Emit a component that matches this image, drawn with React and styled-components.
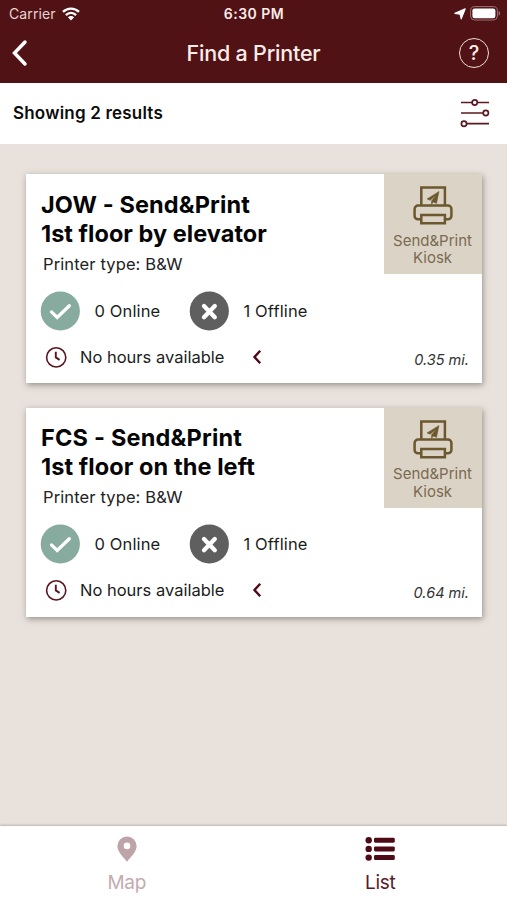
import styled, { createGlobalStyle } from "styled-components";

const printers = [
  {
    id: "jow",
    name: "JOW - Send&Print",
    nameSpacing: "0.12px",
    location: "1st floor by elevator",
    locationSpacing: "0.04px",
    online: 0,
    offline: 1,
    distance: "0.35 mi.",
  },
  {
    id: "fcs",
    name: "FCS - Send&Print",
    nameSpacing: "0.2px",
    location: "1st floor on the left",
    locationSpacing: "0.09px",
    online: 0,
    offline: 1,
    distance: "0.64 mi.",
  },
];

const WifiIcon = () => (
  <svg width="18" height="14" viewBox="0 0 18 14" fill="none" stroke="#fff" strokeWidth="2.3">
    <path d="M1 4.9C5.5.4 12.5.4 17 4.9" />
    <path d="M3.9 8.1c2.9-2.9 7.3-2.9 10.2 0" />
    <path d="M9 13.5 5.9 10.3c1.7-1.6 4.5-1.6 6.2 0z" fill="#fff" stroke="none" />
  </svg>
);

const LocationIcon = () => (
  <svg width="12" height="12" viewBox="0 0 12 12">
    <path d="M11.2.9 7.2 10.9 6.2 6.2.9 5.3z" fill="#fff" stroke="#fff" strokeWidth="1.2" strokeLinejoin="round" />
  </svg>
);

const BatteryIcon = () => (
  <svg width="31" height="15" viewBox="0 0 31 15">
    <rect x=".6" y=".6" width="26.8" height="13.4" rx="4" fill="none" stroke="#9b7274" strokeWidth="1" />
    <rect x="2.4" y="2.4" width="23" height="9.8" rx="2.2" fill="#fff" />
    <path d="M28.6 5v4.6c2-.8 2-3.8 0-4.6z" fill="#9b7274" />
  </svg>
);

const BackIcon = () => (
  <svg width="18" height="28" viewBox="0 0 18 28" fill="none">
    <path d="M15 3 4.5 14 15 25" stroke="#fff" strokeWidth="3.5" strokeLinecap="round" />
  </svg>
);

const FilterIcon = () => (
  <svg width="30" height="30" viewBox="0 0 30 30" fill="#fff" stroke="#5a1a20" strokeWidth="1.7">
    <path d="M1 4.5h28M1 15h28M1 25.7h28" />
    <circle cx="14.7" cy="4.5" r="2.6" />
    <circle cx="25.8" cy="15" r="2.6" />
    <circle cx="4" cy="25.7" r="2.6" />
  </svg>
);

const KioskIcon = () => (
  <svg width="40" height="40" viewBox="0 0 40 40" fill="none" stroke="#6b582e" strokeWidth="2.5">
    <path d="M8.3 20V2.4h23.6V20" />
    <path d="M8 34.3H5a3.4 3.4 0 0 1-3.4-3.4V24a3.4 3.4 0 0 1 3.4-3.4h30a3.4 3.4 0 0 1 3.4 3.4v6.9a3.4 3.4 0 0 1-3.4 3.4h-3" />
    <path d="M8.3 30h23.6v8.2H8.3z" />
    <path d="M26 6.5 14 13.9l3.2 1.4 6-5.3-4.7 6v3.3l2-2.3 3 1.4z" fill="#6b582e" stroke="#6b582e" strokeWidth=".5" />
  </svg>
);

const CheckIcon = () => (
  <svg width="40" height="40" viewBox="0 0 40 40" fill="none">
    <circle cx="20.3" cy="20" r="19.6" fill="#88aba0" />
    <path d="m11.5 20.9 5.7 5.6L29.3 14.7" stroke="#fff" strokeWidth="3.3" strokeLinecap="round" />
  </svg>
);

const CrossIcon = () => (
  <svg width="40" height="40" viewBox="0 0 40 40" fill="none">
    <circle cx="20.3" cy="20" r="19.6" fill="#605f5f" />
    <path d="m15 15 10.8 11.2M25.8 15 15 26.2" stroke="#fff" strokeWidth="4.3" strokeLinecap="round" />
  </svg>
);

const ClockIcon = () => (
  <svg width="22" height="22" viewBox="0 0 22 22" fill="none" stroke="#5a1520">
    <circle cx="11.2" cy="11.4" r="9.6" strokeWidth="1.6" />
    <path d="M10.8 5.8v5.6l3.8 2.5" strokeWidth="1.9" />
  </svg>
);

const ChevronIcon = () => (
  <svg width="10" height="16" viewBox="0 0 10 16" fill="none">
    <path d="M8.2 1.7 2.5 8l5.7 6.3" stroke="#4f0914" strokeWidth="2.4" />
  </svg>
);

const PinIcon = () => (
  <svg width="20" height="26" viewBox="0 0 20 26">
    <path
      d="M10 .5A9.6 9.6 0 0 0 .4 10C.4 15.2 5 20 10 25.7 15 20 19.6 15.2 19.6 10A9.6 9.6 0 0 0 10 .5zm0 6.1a3.3 3.3 0 1 1 0 6.6 3.3 3.3 0 0 1 0-6.6z"
      fill="#bea3a8"
      fillRule="evenodd"
    />
  </svg>
);

const ListIcon = () => (
  <svg width="30" height="26" viewBox="0 0 30 26" fill="#4f0b15">
    {[4.2, 12.9, 21.6].map(y => (
      <g key={y}>
        <circle cx="3.7" cy={y} r="3.2" />
        <rect x="9" y={y - 2.5} width="20.8" height="5" rx="1.4" />
      </g>
    ))}
  </svg>
);

const PrinterCard = ({ printer }) => (
  <Card>
    <Details>
      <Name $spacing={printer.nameSpacing}>{printer.name}</Name>
      <Name $spacing={printer.locationSpacing}>{printer.location}</Name>
      <PrinterType>Printer type: B&amp;W</PrinterType>
      <StatusRow>
        <Status>
          <CheckIcon />
          <Label>{printer.online} Online</Label>
        </Status>
        <Status>
          <CrossIcon />
          <Label>{printer.offline} Offline</Label>
        </Status>
      </StatusRow>
      <HoursRow>
        <ClockIcon />
        <Hours>No hours available</Hours>
        <ChevronIcon />
      </HoursRow>
    </Details>
    <Side>
      <Kiosk>
        <KioskIcon />
        <KioskLabel>
          <span>Send&amp;Print</span>
          <span>Kiosk</span>
        </KioskLabel>
      </Kiosk>
      <Distance>{printer.distance}</Distance>
    </Side>
  </Card>
);

const App = () => (
  <Screen>
    <GlobalStyle />
    <Header>
      <StatusBar>
        <Carrier>
          <span>Carrier</span>
          <WifiIcon />
        </Carrier>
        <Time>6:30 PM</Time>
        <Indicators>
          <LocationIcon />
          <BatteryIcon />
        </Indicators>
      </StatusBar>
      <NavBar>
        <BackIcon />
        <Title>Find a Printer</Title>
        <Help>?</Help>
      </NavBar>
    </Header>

    <ResultsBar>
      <ResultsCount>Showing 2 results</ResultsCount>
      <FilterIcon />
    </ResultsBar>

    <Results>
      {printers.map(printer => (
        <PrinterCard key={printer.id} printer={printer} />
      ))}
    </Results>

    <TabBar>
      <Tab $color="#c4abb0">
        <PinIcon />
        <span>Map</span>
      </Tab>
      <Tab $color="#5a1a24">
        <ListIcon />
        <span>List</span>
      </Tab>
    </TabBar>
  </Screen>
);

const GlobalStyle = createGlobalStyle`
  * {
    box-sizing: border-box;
  }

  body {
    margin: 0;
    font-family: Inter, "Liberation Sans", sans-serif;
  }

  svg {
    display: block;
    flex-shrink: 0;
  }
`;

const Screen = styled.div`
  display: flex;
  flex-direction: column;
  width: 507px;
  height: 900px;
  overflow: hidden;
  background: #e9e1db;
`;

const Header = styled.header`
  height: 82.5px;
  flex-shrink: 0;
  background: #501215;
  color: #fcebe8;
`;

const StatusBar = styled.div`
  display: grid;
  grid-template-columns: 1fr auto 1fr;
  align-items: center;
  height: 27px;
  padding: 0 6px 0 9px;
`;

const Carrier = styled.div`
  display: flex;
  align-items: center;
  gap: 6px;
  font-size: 14px;
  letter-spacing: 0.12px;
  color: #e9d3d1;
`;

const Time = styled.div`
  padding-right: 2px;
  font-size: 14px;
  font-weight: 600;
  letter-spacing: 0.5px;
`;

const Indicators = styled.div`
  display: flex;
  align-items: center;
  justify-content: flex-end;
  gap: 4px;
`;

const NavBar = styled.div`
  display: grid;
  grid-template-columns: 1fr auto 1fr;
  align-items: center;
  height: 51px;
  padding: 0 18px 0 10px;
`;

const Title = styled.h1`
  margin: 0;
  padding-left: 8px;
  font-size: 21.5px;
  font-weight: 500;
  letter-spacing: -0.2px;
`;

const Help = styled.div`
  display: flex;
  align-items: center;
  justify-content: center;
  justify-self: end;
  width: 30px;
  height: 30px;
  border: 1.5px solid #f3dcd8;
  border-radius: 50%;
  font-size: 20px;
  font-weight: 500;
`;

const ResultsBar = styled.div`
  display: flex;
  align-items: center;
  justify-content: space-between;
  flex-shrink: 0;
  height: 61.5px;
  padding: 0 17px 0 13px;
  background: #fff;
`;

const ResultsCount = styled.div`
  font-size: 17px;
  font-weight: 600;
  letter-spacing: 0.2px;
  color: #0c0c0c;
`;

const Results = styled.main`
  display: flex;
  flex-direction: column;
  flex: 1;
  gap: 24.2px;
  padding: 30.4px 25px 0 26px;
`;

const Card = styled.article`
  display: flex;
  height: 209px;
  background: #fff;
  box-shadow: 1px 2px 6px rgba(70, 65, 55, 0.5);
`;

const Details = styled.div`
  flex: 1;
  padding: 15.2px 0 0 15px;
`;

const Name = styled.div`
  font-size: 23.5px;
  font-weight: 700;
  line-height: 29px;
  letter-spacing: ${props => props.$spacing};
  white-space: nowrap;
  color: #050505;
`;

const PrinterType = styled.div`
  margin: 5.7px 0 0 2px;
  font-size: 16.5px;
  line-height: 22px;
  letter-spacing: 0.12px;
  color: #222;
`;

const StatusRow = styled.div`
  display: flex;
  margin: 16px 0 0 -1px;
`;

const Status = styled.div`
  display: flex;
  align-items: center;
  gap: 14.5px;
  width: 149px;
`;

const Label = styled.span`
  font-size: 16.5px;
  letter-spacing: 0.12px;
  white-space: nowrap;
  color: #1c1c1c;
`;

const HoursRow = styled.div`
  display: flex;
  align-items: center;
  margin: 15px 0 0 4px;
`;

const Hours = styled.span`
  width: 172px;
  margin-left: 13px;
  font-size: 16.5px;
  color: #1c1c1c;
`;

const Side = styled.div`
  display: flex;
  flex-direction: column;
  justify-content: space-between;
  width: 98px;
`;

const Kiosk = styled.div`
  display: flex;
  flex-direction: column;
  align-items: center;
  height: 100px;
  padding-top: 11px;
  background: #dcd3c7;
`;

const KioskLabel = styled.div`
  display: flex;
  flex-direction: column;
  align-items: center;
  margin: 6.5px 1px 0 0;
  font-size: 15px;
  line-height: 17.5px;
  color: #796a50;
`;

const Distance = styled.div`
  padding: 0 13px 14.6px 0;
  font-size: 14.5px;
  font-style: italic;
  line-height: 18px;
  text-align: right;
  color: #333;
`;

const TabBar = styled.nav`
  display: grid;
  grid-template-columns: 1fr 1fr;
  flex-shrink: 0;
  height: 74px;
  background: #fff;
  box-shadow: 0 -1px 2px rgba(70, 75, 70, 0.3);
`;

const Tab = styled.div`
  display: flex;
  flex-direction: column;
  align-items: center;
  gap: 9px;
  padding-top: 10px;
  font-size: 19px;
  line-height: 24px;
  letter-spacing: -0.3px;
  color: ${props => props.$color};
`;

export default App;
